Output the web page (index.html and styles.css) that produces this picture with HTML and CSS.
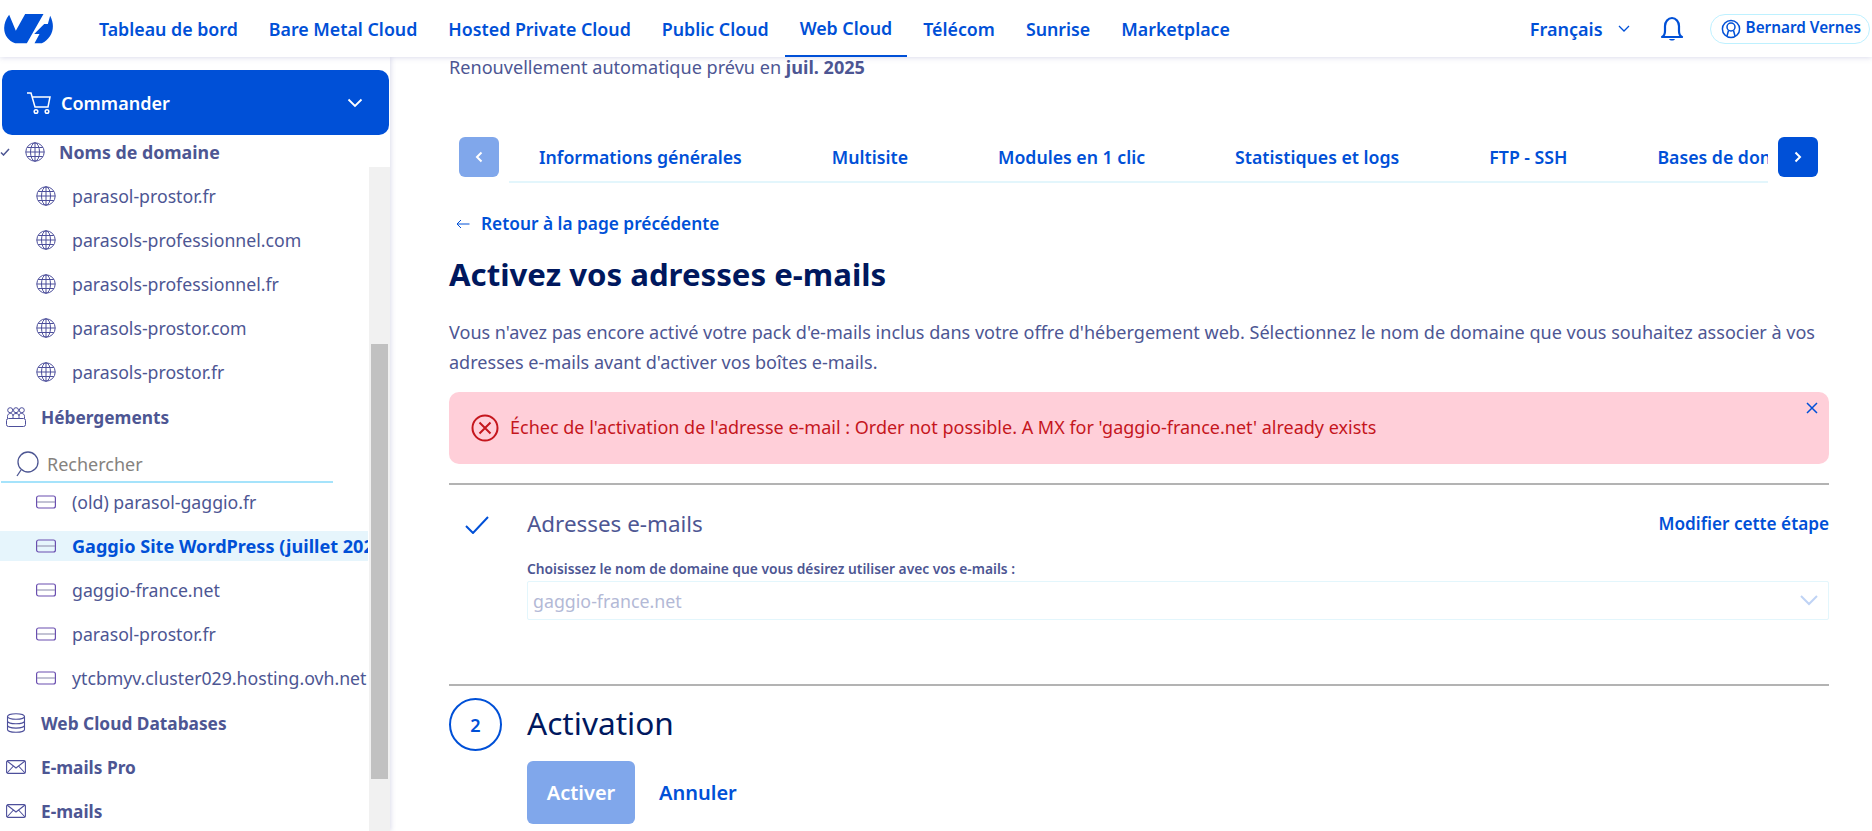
FILE: index.html
```html
<!DOCTYPE html>
<html lang="fr">
<head>
    <meta charset="UTF-8">
    <title>Activez vos adresses e-mails</title>
    <link rel="stylesheet" href="styles.css">
</head>
<body>
    <header class="topbar">
        <svg class="logo" viewBox="12 20 152 90" width="51" height="30"><path d="M27 22L47 70 75 20H130L80 108H45C25 100 12 85 12 62 12 48 18 33 27 22Z" fill="#0050d7"/><path d="M150 25C168 60 155 92 125 108H103L118 80H102L132 50H143Z" fill="#0050d7"/></svg>
        <nav class="topnav">
            <a>Tableau de bord</a>
            <a>Bare Metal Cloud</a>
            <a>Hosted Private Cloud</a>
            <a>Public Cloud</a>
            <a class="current">Web Cloud</a>
            <a>Télécom</a>
            <a>Sunrise</a>
            <a>Marketplace</a>
        </nav>
        <div class="topbar-right">
            <span class="lang">Français
                <svg viewBox="0 0 12 8" width="12" height="8"><path d="M1 1l5 5 5-5" fill="none" stroke="#0050d7" stroke-width="1.3"/></svg>
            </span>
            <svg class="bell" viewBox="0 0 24 26" width="24" height="26"><path d="M2 21c2-1 3-3 3-6V10c0-4 3-8 7-8s7 4 7 8v5c0 3 1 5 3 6z" fill="none" stroke="#0050d7" stroke-width="2.2" stroke-linejoin="round"/><path d="M9 23c1 2 5 2 6 0z" fill="#0050d7"/></svg>
            <span class="user">
                <svg viewBox="0 0 20 20" width="20" height="20"><circle cx="10" cy="10" r="8.6" fill="none" stroke="#0050d7" stroke-width="1.5"/><circle cx="10" cy="8" r="4" fill="none" stroke="#0050d7" stroke-width="1.5"/><path d="M7.5 11.5L6 17M12.5 11.5L14 17" fill="none" stroke="#0050d7" stroke-width="1.5"/></svg>
                <span class="user-name">Bernard Vernes</span>
            </span>
        </div>
    </header>

    <div class="layout">
        <aside class="sidebar">
            <div class="order-btn">
                <svg viewBox="0 0 26 24" width="26" height="24"><path d="M1 2h4l4 14h13l2-10H6.5" fill="none" stroke="#fff" stroke-width="1.5"/><circle cx="10" cy="20.5" r="1.8" fill="none" stroke="#fff" stroke-width="1.5"/><circle cx="21" cy="20.5" r="1.8" fill="none" stroke="#fff" stroke-width="1.5"/></svg>
                <span>Commander</span>
                <svg class="order-chevron" viewBox="0 0 16 10" width="16" height="10"><path d="M1.5 1.5L8 8l6.5-6.5" fill="none" stroke="#fff" stroke-width="1.8"/></svg>
            </div>
            <ul class="side-list">
                <li class="side-row section domain-head">
                    <svg class="tick" viewBox="0 0 10 8" width="10" height="8"><path d="M1 4.5L3.5 7 9 1" fill="none" stroke="#4d5693" stroke-width="1.5"/></svg>
                    <svg class="ico" viewBox="0 0 20 20" width="20" height="20"><use href="#globe"/></svg>
                    Noms de domaine
                </li>
                <li class="side-row sub"><svg class="ico" viewBox="0 0 20 20" width="20" height="20"><use href="#globe"/></svg>parasol-prostor.fr</li>
                <li class="side-row sub"><svg class="ico" viewBox="0 0 20 20" width="20" height="20"><use href="#globe"/></svg>parasols-professionnel.com</li>
                <li class="side-row sub"><svg class="ico" viewBox="0 0 20 20" width="20" height="20"><use href="#globe"/></svg>parasols-professionnel.fr</li>
                <li class="side-row sub"><svg class="ico" viewBox="0 0 20 20" width="20" height="20"><use href="#globe"/></svg>parasols-prostor.com</li>
                <li class="side-row sub"><svg class="ico" viewBox="0 0 20 20" width="20" height="20"><use href="#globe"/></svg>parasols-prostor.fr</li>
                <li class="side-row section">
                    <svg class="ico" viewBox="0 0 20 20" width="20" height="20"><g fill="none" stroke="#4d4f9b" stroke-width="1"><circle cx="4.200" cy="3.200" r="2.500"/><circle cx="10" cy="3.200" r="2.500"/><circle cx="15.800" cy="3.200" r="2.500"/><path d="M1.500 11.500V9.500C1.500 7.500 2.500 6.500 4.500 6.500S7 7.500 7 9M7 11.500V9.500C7 7.500 8 6.500 10 6.500S13 7.500 13 9.500V11.500M13 9C13 7.500 13.500 6.500 15.500 6.500S18.500 7.500 18.500 9.500V11.500"/><rect x=".5" y="11.500" width="19" height="8" rx="2"/></g></svg>
                    Hébergements
                </li>
                <li class="search">
                    <svg viewBox="0 0 24 26" width="24" height="26"><circle cx="13" cy="11" r="10" fill="none" stroke="#4d5693" stroke-width="1.3"/><path d="M6 19l-4 6" fill="none" stroke="#4d5693" stroke-width="1.3"/></svg>
                    <span>Rechercher</span>
                </li>
                <li class="side-row sub"><svg class="ico" viewBox="0 0 20 14" width="20" height="14"><use href="#server"/></svg>(old) parasol-gaggio.fr</li>
                <li class="side-row sub active"><svg class="ico" viewBox="0 0 20 14" width="20" height="14"><use href="#server"/></svg>Gaggio Site WordPress (juillet 2024)</li>
                <li class="side-row sub"><svg class="ico" viewBox="0 0 20 14" width="20" height="14"><use href="#server"/></svg>gaggio-france.net</li>
                <li class="side-row sub"><svg class="ico" viewBox="0 0 20 14" width="20" height="14"><use href="#server"/></svg>parasol-prostor.fr</li>
                <li class="side-row sub"><svg class="ico" viewBox="0 0 20 14" width="20" height="14"><use href="#server"/></svg>ytcbmyv.cluster029.hosting.ovh.net</li>
                <li class="side-row section">
                    <svg class="ico" viewBox="0 0 20 20" width="20" height="20"><g fill="none" stroke="#4d4f9b" stroke-width="1.1"><ellipse cx="10" cy="3.5" rx="8.5" ry="2.8"/><path d="M1.5 3.5v13c0 1.5 3.8 2.8 8.5 2.8s8.500-1.300 8.500-2.800v-13M1.500 8c0 1.500 3.800 2.800 8.500 2.800s8.500-1.300 8.500-2.800M1.500 12.300c0 1.500 3.800 2.800 8.500 2.800s8.500-1.300 8.500-2.800"/></g></svg>
                    Web Cloud Databases
                </li>
                <li class="side-row section"><svg class="ico" viewBox="0 0 20 14" width="20" height="14"><use href="#mail"/></svg>E-mails Pro</li>
                <li class="side-row section"><svg class="ico" viewBox="0 0 20 14" width="20" height="14"><use href="#mail"/></svg>E-mails</li>
            </ul>
            <div class="scroll-track"><div class="scroll-thumb"></div></div>
        </aside>

        <main class="content">
            <p class="renewal">Renouvellement automatique prévu en <b>juil. 2025</b></p>

            <div class="tabs-row">
                <span class="tab-arrow disabled"><svg viewBox="0 0 8 12" width="8" height="12"><path d="M6.500 1.500L2 6l4.500 4.500" fill="none" stroke="#fff" stroke-width="2"/></svg></span>
                <div class="tabs">
                    <a>Informations générales</a>
                    <a>Multisite</a>
                    <a>Modules en 1 clic</a>
                    <a>Statistiques et logs</a>
                    <a>FTP - SSH</a>
                    <a>Bases de données</a>
                </div>
                <span class="tab-arrow"><svg viewBox="0 0 8 12" width="8" height="12"><path d="M1.500 1.500L6 6l-4.500 4.500" fill="none" stroke="#fff" stroke-width="2"/></svg></span>
            </div>

            <a class="back-link"><svg viewBox="0 0 14 10" width="14" height="10"><path d="M13.500 5H1M5 1L1 5l4 4" fill="none" stroke="#0050d7" stroke-width="1"/></svg>Retour à la page précédente</a>

            <h1>Activez vos adresses e-mails</h1>
            <p class="intro">Vous n'avez pas encore activé votre pack d'e-mails inclus dans votre offre d'hébergement web. Sélectionnez le nom de domaine que vous souhaitez associer à vos adresses e-mails avant d'activer vos boîtes e-mails.</p>

            <div class="alert">
                <svg viewBox="0 0 28 28" width="28" height="28"><circle cx="14" cy="14" r="12.500" fill="none" stroke="#c5161d" stroke-width="2"/><path d="M8.500 8.500l11 11M19.500 8.500l-11 11" fill="none" stroke="#c5161d" stroke-width="2"/></svg>
                <span class="alert-text">Échec de l'activation de l'adresse e-mail : Order not possible. A MX for 'gaggio-france.net' already exists</span>
                <svg class="alert-close" viewBox="0 0 12 12" width="12" height="12"><path d="M1 1l10 10M11 1L1 11" fill="none" stroke="#0050d7" stroke-width="1.500"/></svg>
            </div>

            <section class="step step-done">
                <div class="step-mark"><svg viewBox="0 0 24 18" width="24" height="18"><path d="M1 10l7 7L23 1" fill="none" stroke="#0050d7" stroke-width="2"/></svg></div>
                <div class="step-body">
                    <div class="step-head">
                        <h2>Adresses e-mails</h2>
                        <a>Modifier cette étape</a>
                    </div>
                    <label class="field-label">Choisissez le nom de domaine que vous désirez utiliser avec vos e-mails :</label>
                    <div class="select">
                        <span>gaggio-france.net</span>
                        <svg viewBox="0 0 18 11" width="18" height="11"><path d="M1 1l8 8 8-8" fill="none" stroke="#bfd3f5" stroke-width="2"/></svg>
                    </div>
                </div>
            </section>

            <section class="step step-current">
                <div class="step-mark"><span class="step-num">2</span></div>
                <div class="step-body">
                    <h2>Activation</h2>
                    <div class="actions">
                        <button type="button">Activer</button>
                        <a>Annuler</a>
                    </div>
                </div>
            </section>
        </main>
    </div>

    <svg class="defs" width="0" height="0">
        <symbol id="globe" viewBox="0 0 20 20"><g fill="none" stroke="#4d4f9b" stroke-width="1"><circle cx="10" cy="10" r="9.200"/><ellipse cx="10" cy="10" rx="4.500" ry="9.200"/><path d="M10 .8v18.400M.8 10h18.400M2.200 5.500h15.600M2.200 14.500h15.600"/></g></symbol>
        <symbol id="server" viewBox="0 0 20 14"><g fill="none" stroke-width="1.200"><rect x=".6" y="1" width="18.800" height="12" rx="2" stroke="#6a4fb0"/><path d="M1 7h18" stroke="#9a9ab8"/></g></symbol>
        <symbol id="mail" viewBox="0 0 20 14"><g fill="none" stroke="#4d4f9b" stroke-width="1.100"><rect x=".6" y=".6" width="18.800" height="12.800" rx="1.500"/><path d="M1 1l9 7 9-7M1 13l6.500-7M19 13l-6.500-7"/></g></symbol>
    </svg>
</body>
</html>
```

FILE: styles.css
```css
* {
    box-sizing: border-box;
}
html, body {
    height: 100%;
}
body {
    margin: 0;
    font-family: "Noto Sans", "Open Sans", sans-serif;
    font-size: 18px;
    color: #4d5693;
    background-color: white;
    overflow: hidden;
}
p, h1, h2, ul {
    margin: 0;
    padding: 0;
}
ul {
    list-style: none;
}
a {
    color: #0050d7;
    font-weight: 600;
}
b {
    font-weight: 700;
}
.defs {
    position: absolute;
}

/* barre du haut */
.topbar {
    position: relative;
    z-index: 2;
    height: 57px;
    padding: 0 2px 0 4px;
    display: flex;
    align-items: center;
    background-color: white;
    box-shadow: 0 0 6px rgba(77, 79, 155, 0.25);
}
.logo {
    margin-right: 44px;
}
.topnav {
    height: 100%;
    display: flex;
    gap: 31px;
}
.topnav a {
    display: flex;
    align-items: center;
    font-size: 17.8px;
    font-weight: 600;
}
.topnav .current {
    padding: 0 15px;
    margin: 0 -15px;
    border-bottom: 2px solid #0050d7;
}
.topbar-right {
    margin-left: auto;
    display: flex;
    align-items: center;
}
.lang {
    display: flex;
    align-items: center;
    gap: 15px;
    color: #0050d7;
    font-weight: 600;
}
.bell {
    margin-left: 30px;
}
.user {
    margin-left: 26px;
    height: 30px;
    padding: 0 8px 0 10px;
    display: flex;
    align-items: center;
    gap: 5px;
    border: 1px solid #bef1ff;
    border-radius: 15px;
    color: #0050d7;
    font-size: 15.3px;
    font-weight: 600;
}
.user-name {
    margin-top: -3px;
}

.layout {
    display: flex;
    height: calc(100% - 57px);
}

/* menu de gauche */
.sidebar {
    position: relative;
    flex: 0 0 390px;
    padding-top: 13px;
    overflow: hidden;
    box-shadow: 1px 0 5px rgba(77, 79, 155, 0.2);
}
.order-btn {
    height: 65px;
    margin: 0 1px 2px 2px;
    padding: 0 26px 0 24px;
    display: flex;
    align-items: center;
    gap: 9px;
    background-color: #0050d7;
    border-radius: 10px;
    color: white;
    font-weight: 600;
}
.order-chevron {
    margin-left: auto;
}
.side-list {
    display: flex;
    flex-direction: column;
    gap: 14px;
}
.side-row {
    position: relative;
    width: 368px;
    height: 30px;
    display: flex;
    align-items: center;
    font-size: 17.7px;
    white-space: nowrap;
    overflow: hidden;
}
.section {
    padding: 2px 0 0 6px;
    gap: 15px;
    font-size: 17.3px;
    font-weight: 700;
}
.domain-head {
    padding: 0 0 0 25px;
    gap: 14px;
    font-size: 17.8px;
}
.tick {
    position: absolute;
    left: 0;
    top: 11px;
}
.sub {
    padding-left: 36px;
    gap: 16px;
}
.ico {
    flex: none;
}
.active {
    background-color: #e6f5fc;
    color: #0050d7;
    font-size: 18.1px;
    font-weight: 700;
}
.search {
    width: 332px;
    height: 38px;
    margin: 0 0 -10px 1px;
    padding: 2px 0 0 14px;
    display: flex;
    align-items: center;
    gap: 8px;
    border-bottom: 2px solid #a5e3fb;
    color: #85827e;
}
.scroll-track {
    position: absolute;
    top: 110px;
    right: 0;
    bottom: 0;
    width: 21px;
    background-color: #f1f1f1;
}
.scroll-thumb {
    height: 435px;
    margin: 177px 2px 0;
    background-color: #c1c1c1;
}

/* contenu */
.content {
    flex: 1;
    min-width: 0;
    padding: 0 43px 0 59px;
}
.renewal {
    font-size: 18.1px;
    line-height: 20px;
}
.tabs-row {
    margin: 60px 11px 0 10px;
    display: flex;
    align-items: flex-start;
    gap: 10px;
}
.tab-arrow {
    flex: none;
    width: 40px;
    height: 40px;
    display: flex;
    align-items: center;
    justify-content: center;
    background-color: #0050d7;
    border-radius: 6px;
}
.tab-arrow.disabled {
    background-color: #80a7eb;
}
.tabs {
    flex: 1;
    min-width: 0;
    height: 46px;
    padding-left: 30px;
    display: flex;
    gap: 90px;
    border-bottom: 2px solid #e3f6fc;
    font-size: 17.7px;
    line-height: 40px;
    white-space: nowrap;
    overflow: hidden;
}
.back-link {
    margin: 29px 0 0 7px;
    display: flex;
    align-items: center;
    gap: 11px;
    font-size: 17.3px;
    line-height: 24px;
}
h1 {
    margin-top: 16px;
    color: #00185e;
    font-size: 31.2px;
    font-weight: 700;
    line-height: 44px;
}
.intro {
    margin-top: 21px;
    font-size: 18.06px;
    line-height: 30px;
}
.alert {
    position: relative;
    height: 72px;
    margin-top: 15px;
    padding-left: 22px;
    display: flex;
    align-items: center;
    gap: 11px;
    background-color: #ffcfd9;
    border-radius: 10px;
    color: #c5161d;
}
.alert-text {
    margin-top: -2px;
}
.alert-close {
    position: absolute;
    top: 10px;
    right: 11px;
}
.step {
    display: flex;
    border-top: 2px solid #b3b3b3;
}
.step-done {
    height: 201px;
    margin-top: 19px;
    padding-top: 21px;
}
.step-mark {
    flex: 0 0 78px;
}
.step-done .step-mark {
    padding: 9px 0 0 16px;
}
.step-body {
    flex: 1;
    min-width: 0;
}
.step-head {
    height: 34px;
    display: flex;
    align-items: center;
    justify-content: space-between;
}
.step-head a {
    font-size: 17.2px;
}
h2 {
    font-size: 22.4px;
    font-weight: 400;
}
.field-label {
    display: block;
    margin-top: 20px;
    font-size: 13.8px;
    font-weight: 600;
    line-height: 18px;
}
.select {
    height: 39px;
    margin-top: 3px;
    padding: 0 10px 0 5px;
    display: flex;
    align-items: center;
    justify-content: space-between;
    border: 1px solid #e3f6fc;
    border-radius: 2px;
    font-size: 17.8px;
    color: #b3b9d6;
}
.step-current {
    padding-top: 12px;
}
.step-current h2 {
    margin-top: -2px;
    color: #00185e;
    font-size: 31.6px;
    line-height: 53px;
}
.step-num {
    width: 53px;
    height: 53px;
    display: flex;
    align-items: center;
    justify-content: center;
    border: 2px solid #0050d7;
    border-radius: 50%;
    color: #0050d7;
    font-weight: 600;
}
.actions {
    margin-top: 12px;
    display: flex;
    align-items: center;
    gap: 24px;
}
button {
    width: 108px;
    height: 63px;
    padding: 0;
    border: none;
    border-radius: 6px;
    background-color: #80a7eb;
    color: white;
    font-family: inherit;
    font-size: 20px;
    font-weight: 600;
}
.actions a {
    font-size: 20px;
}
```
